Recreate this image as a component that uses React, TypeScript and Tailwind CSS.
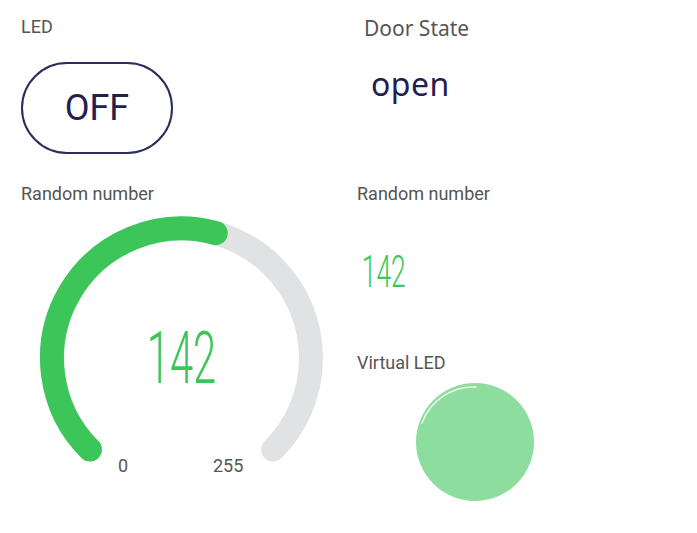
import React from "react";

// Types
interface GaugeProps {
  value: number;
  min?: number;
  max?: number;
}

const polar = (cx: number, cy: number, r: number, deg: number) => {
  const a = (deg * Math.PI) / 180;
  return { x: cx + r * Math.sin(a), y: cy - r * Math.cos(a) };
};

const arcPath = (cx: number, cy: number, r: number, from: number, to: number) => {
  const s = polar(cx, cy, r, from);
  const e = polar(cx, cy, r, to);
  const large = to - from > 180 ? 1 : 0;
  return `M ${s.x} ${s.y} A ${r} ${r} 0 ${large} 1 ${e.x} ${e.y}`;
};

// Atomic Components
const Label = ({ children }: { children: React.ReactNode }) => (
  <div className="text-[18px] leading-[22px] text-[#555] font-['Roboto',sans-serif]">
    {children}
  </div>
);

const Gauge = ({ value, min = 0, max = 255 }: GaugeProps) => {
  const cx = 160.5;
  const cy = 157;
  const r = 129.5;
  const end = -135 + ((value - min) / (max - min)) * 270;

  return (
    <div className="relative w-[320px] h-[280px]">
      <svg width="320" height="280" viewBox="0 0 320 280">
        <path d={arcPath(cx, cy, r, -135, 135)} fill="none" stroke="#e1e2e4" strokeWidth="24" strokeLinecap="round" />
        <path d={arcPath(cx, cy, r, -135, end)} fill="none" stroke="#3cc65a" strokeWidth="24" strokeLinecap="round" />
      </svg>
      <div className="absolute left-0 top-[118px] w-[321px] text-center text-[#3cc65a] font-['Roboto',sans-serif] font-light text-[72px] leading-[80px] scale-x-[0.58]">
        {value}
      </div>
      <div className="absolute left-[97px] top-[254px] text-[18px] leading-[22px] text-[#555] font-['Roboto',sans-serif]">
        {min}
      </div>
      <div className="absolute left-[192px] top-[254px] text-[18px] leading-[22px] text-[#555] font-['Roboto',sans-serif]">
        {max}
      </div>
    </div>
  );
};

const VirtualLed = () => (
  <div className="relative w-[118px] h-[118px] rounded-full bg-[#8ddd9e]">
    <svg className="absolute inset-0" width="118" height="118" viewBox="0 0 118 118">
      <path d="M 6 40 A 55 55 0 0 1 60 4" fill="none" stroke="#ffffff" strokeOpacity="0.8" strokeWidth="1.5" strokeLinecap="round" />
    </svg>
  </div>
);

// Main Component
export default function App() {
  return (
    <div className="w-[697px] h-[533px] bg-white pl-[21px] grid grid-cols-[336px_1fr]">
      <div className="flex flex-col">
        <div className="pt-[16px]">
          <Label>LED</Label>
        </div>
        <button className="mt-[24px] w-[152px] h-[92px] rounded-full border-2 border-[#2b2d5a] text-[#1f2050] text-[36px] leading-[40px] font-['Roboto',sans-serif] flex items-center justify-center">
          OFF
        </button>
        <div className="mt-[29px]">
          <Label>Random number</Label>
        </div>
        <div className="mt-[-4px]">
          <Gauge value={142} />
        </div>
      </div>

      <div className="flex flex-col">
        <div className="pt-[15px] pl-[7px] text-[21px] leading-[26px] text-[#555] font-['Noto_Sans',sans-serif]">
          Door State
        </div>
        <div className="mt-[24px] pl-[14px] text-[32px] leading-[38px] text-[#1f2050] font-['Noto_Sans',sans-serif] tracking-[0.5px]">
          open
        </div>
        <div className="mt-[80px]">
          <Label>Random number</Label>
        </div>
        <div className="mt-[45px] pl-[8px] origin-left scale-x-[0.6] text-[#3cc65a] text-[44px] leading-[44px] font-['Roboto',sans-serif] font-light">
          142
        </div>
        <div className="mt-[58px]">
          <Label>Virtual LED</Label>
        </div>
        <div className="mt-[9px] pl-[59px]">
          <VirtualLed />
        </div>
      </div>
    </div>
  );
}
